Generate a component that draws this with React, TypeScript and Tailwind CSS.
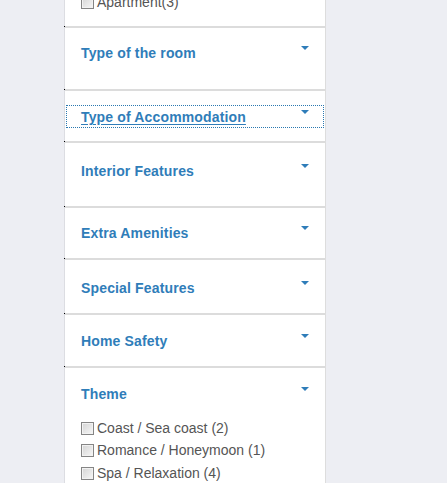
const sans = { fontFamily: '"Liberation Sans", Arial, sans-serif' };

type Section = {
  title: string;
  pt: string;
  pb: string;
  focused?: boolean;
  items?: string[];
};

const sections: Section[] = [
  { title: 'Type of the room', pt: 'pt-[17px]', pb: 'pb-[28px]' },
  { title: 'Type of Accommodation', pt: 'pt-[15px]', pb: 'pb-[14px]', focused: true },
  { title: 'Interior Features', pt: 'pt-[20px]', pb: 'pb-[27px]' },
  { title: 'Extra Amenities', pt: 'pt-[17px]', pb: 'pb-[17px]' },
  { title: 'Special Features', pt: 'pt-[20px]', pb: 'pb-[17px]' },
  { title: 'Home Safety', pt: 'pt-[18px]', pb: 'pb-[17px]' },
  {
    title: 'Theme',
    pt: 'pt-[18px]',
    pb: 'pb-[20px]',
    items: ['Coast / Sea coast (2)', 'Romance / Honeymoon (1)', 'Spa / Relaxation (4)'],
  },
];

function Caret() {
  return (
    <svg width="8" height="4" viewBox="0 0 8 4" className="mt-[1px] shrink-0">
      <polygon points="0,0 8,0 4,4" fill="#2f7db9" />
    </svg>
  );
}

function Checkbox() {
  return (
    <span className="inline-block w-[13px] h-[13px] shrink-0 border border-[#858585] bg-gradient-to-br from-[#d4d4d4] to-[#f7f7f7] shadow-[inset_0_0_0_1px_#f2f2f2]" />
  );
}

function CheckRow({ label, tall = false }: { label: string; tall?: boolean }) {
  return (
    <div
      className={`flex items-center gap-[3px] ${tall ? 'h-[22.5px]' : 'h-[22px]'} text-[14px] text-[#555555]`}
    >
      <Checkbox />
      <span>{label}</span>
    </div>
  );
}

function Separator() {
  return (
    <div className="relative h-[2px] bg-[#dcdcdc]">
      <span className="absolute left-[-1px] top-0 w-[1px] h-[1px] bg-black" />
    </div>
  );
}

function FilterSection({ section }: { section: Section }) {
  if (section.focused) {
    return (
      <div className={`${section.pt} ${section.pb} px-[2px]`}>
        <div className="flex items-start justify-between pl-[14px] pr-[14px] pt-[3px] pb-[2px] outline outline-1 outline-dotted outline-[#2a78b0]">
          <span className="text-[14px] leading-[16px] font-bold tracking-[0.15px] text-[#2f7db9] underline underline-offset-[2px]">
            {section.title}
          </span>
          <Caret />
        </div>
      </div>
    );
  }

  return (
    <div className={`${section.pt} ${section.pb} px-[16px]`}>
      <div className="flex items-start justify-between">
        <span className="text-[14px] leading-[16px] font-bold tracking-[0.15px] text-[#2f7db9]">
          {section.title}
        </span>
        <Caret />
      </div>
      {section.items && (
        <div className="mt-[15px]">
          {section.items.map((item) => (
            <CheckRow key={item} label={item} tall />
          ))}
        </div>
      )}
    </div>
  );
}

export default function App() {
  return (
    <div className="h-[483px] overflow-hidden bg-[#edeef3]" style={sans}>
      <div className="ml-[64px] w-[262px] min-h-full bg-white border-l border-l-[#dcdde2] border-r border-r-[#dddddd]">
        <div className="px-[16px] pb-[13px] -mt-[9px]">
          <CheckRow label="Apartment(3)" />
        </div>
        {sections.map((s) => (
          <div key={s.title}>
            <Separator />
            <FilterSection section={s} />
          </div>
        ))}
      </div>
    </div>
  );
}
